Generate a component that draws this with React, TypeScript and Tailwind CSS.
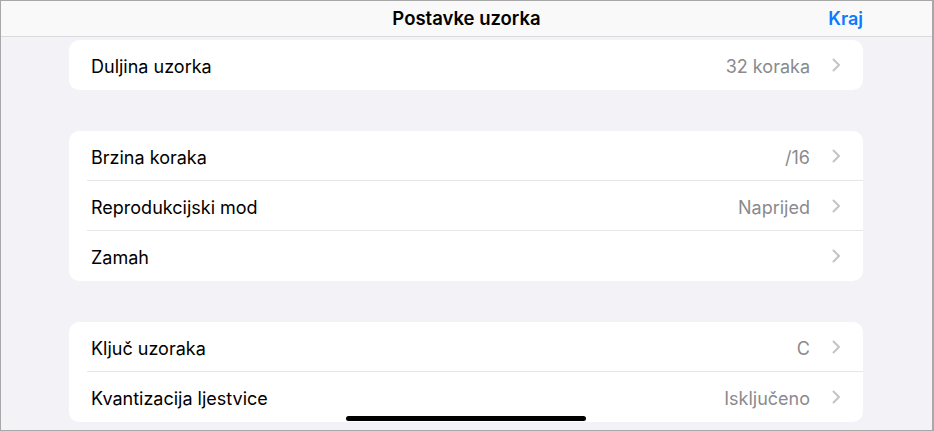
import React from "react";

function Chevron() {
  return (
    <svg width="9" height="14" viewBox="0 0 9 14" className="shrink-0">
      <path d="M1.5 1.5 L7 7 L1.5 12.5" fill="none" stroke="#c4c4c7" strokeWidth="2" strokeLinecap="round" strokeLinejoin="round" />
    </svg>
  );
}

function Row({ label, value, last }: { label: string; value?: string; last?: boolean }) {
  return (
    <div className="relative flex h-[50px] items-center pl-[22px] pr-[22px]">
      <span className="flex-1 pt-[3px] text-[18px] text-black">{label}</span>
      {value ? <span className="mr-[22px] pt-[3px] text-[18px] text-[#8a8a8e]">{value}</span> : null}
      <Chevron />
      {!last ? <div className="absolute bottom-0 left-[18px] right-0 h-px bg-[#e5e5ea]" /> : null}
    </div>
  );
}

export default function App() {
  return (
    <div
      className="relative h-[431px] w-[934px] overflow-hidden border-b border-l border-r-2 border-t border-[#a8a8a8] bg-[#f2f2f7]"
      style={{ fontFamily: "Inter, 'Noto Sans', sans-serif" }}
    >
      <div className="relative flex h-[36px] items-center justify-center border-b border-[#d9d9de] bg-[#f9f9f9]">
        <span className="text-[18.5px] font-semibold text-black">Postavke uzorka</span>
        <span className="absolute right-[69px] text-[18px] font-semibold text-[#0a7aff]">Kraj</span>
      </div>
      <div className="flex flex-col gap-[41px] pl-[68px] pr-[69px] pt-[3px]">
        <div className="overflow-hidden rounded-[10px] bg-white">
          <Row label="Duljina uzorka" value="32 koraka" last />
        </div>
        <div className="overflow-hidden rounded-[10px] bg-white">
          <Row label="Brzina koraka" value="/16" />
          <Row label="Reprodukcijski mod" value="Naprijed" />
          <Row label="Zamah" last />
        </div>
        <div className="overflow-hidden rounded-[10px] bg-white">
          <Row label="Ključ uzoraka" value="C" />
          <Row label="Kvantizacija ljestvice" value="Isključeno" last />
        </div>
      </div>
      <div className="absolute left-[345px] top-[415px] h-[5px] w-[240px] rounded-full bg-black" />
    </div>
  );
}
